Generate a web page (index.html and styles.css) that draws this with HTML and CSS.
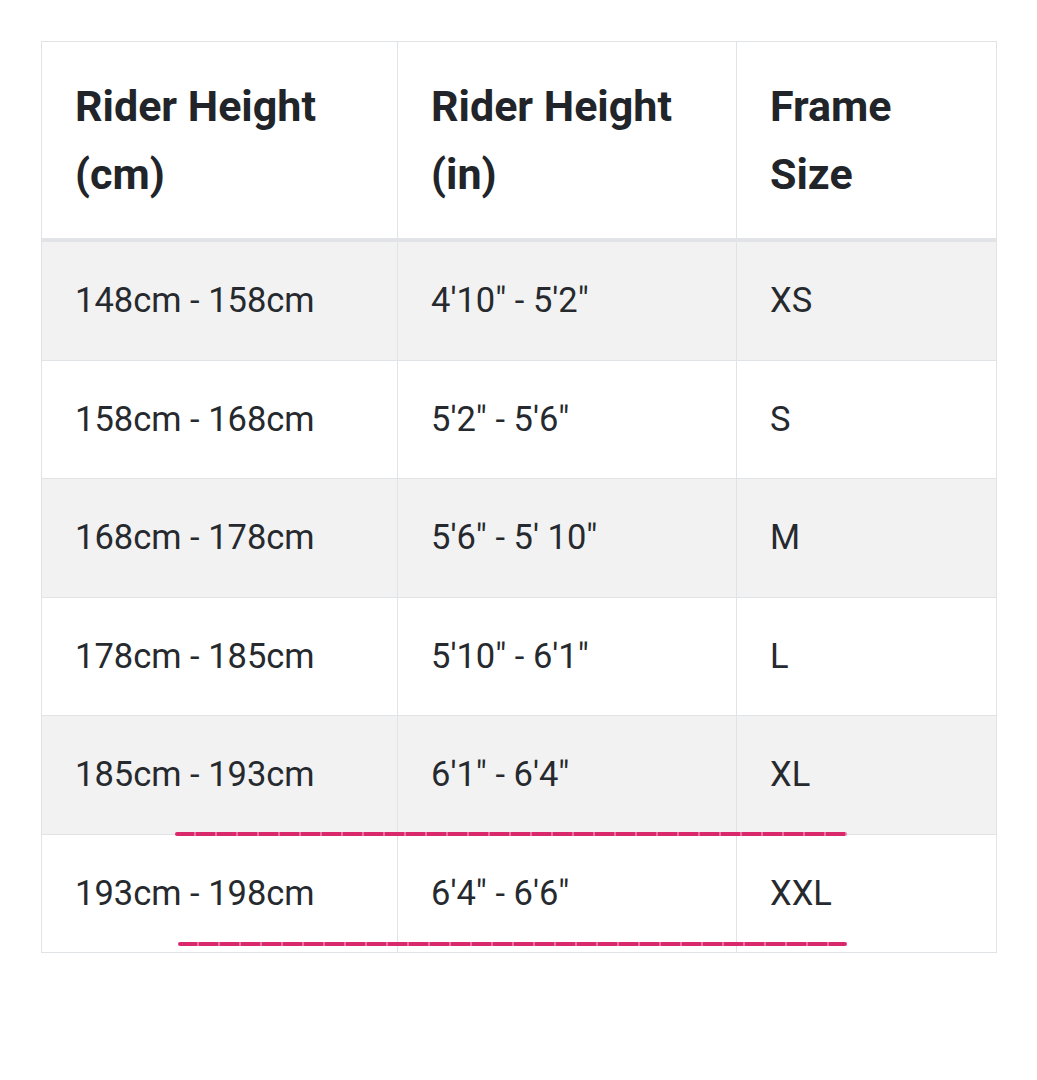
FILE: index.html
```html
<!DOCTYPE html>
<html lang="en">
<head>
<meta charset="utf-8">
<title>Frame size chart</title>
<link rel="stylesheet" href="styles.css">
</head>
<body>
<div class="page">
  <table class="size-table">
    <colgroup>
      <col class="c1">
      <col class="c2">
      <col class="c3">
    </colgroup>
    <thead>
      <tr>
        <th>Rider Height (cm)</th>
        <th>Rider Height (in)</th>
        <th>Frame Size</th>
      </tr>
    </thead>
    <tbody>
      <tr><td>148cm - 158cm</td><td>4'10" - 5'2"</td><td>XS</td></tr>
      <tr><td>158cm - 168cm</td><td>5'2" - 5'6"</td><td>S</td></tr>
      <tr><td>168cm - 178cm</td><td>5'6" - 5' 10"</td><td>M</td></tr>
      <tr><td>178cm - 185cm</td><td>5'10" - 6'1"</td><td>L</td></tr>
      <tr><td>185cm - 193cm</td><td>6'1" - 6'4"</td><td>XL</td></tr>
      <tr><td>193cm - 198cm</td><td>6'4" - 6'6"</td><td>XXL</td></tr>
    </tbody>
  </table>
  <div class="mark mark-1"></div>
  <div class="mark mark-2"></div>
</div>
</body>
</html>
```
FILE: styles.css
```css
html, body {
  margin: 0;
  padding: 0;
  background: #ffffff;
}

.page {
  position: relative;
  padding: 41px 0 0 41px;
  width: 1037px;
  height: 1080px;
  box-sizing: border-box;
  font-family: Roboto, "Liberation Sans", sans-serif;
  color: #212529;
}

.size-table {
  border-collapse: collapse;
  width: 955px;
  table-layout: fixed;
  border: 1px solid #e1e4e7;
}

.c1 { width: 356px; }
.c2 { width: 339px; }
.c3 { width: 260px; }

.size-table th,
.size-table td {
  border: 1px solid #e1e4e7;
  text-align: left;
  vertical-align: top;
  padding: 30px 33px;
}

.size-table th {
  font-size: 43px;
  line-height: 68px;
  font-weight: 700;
  color: #212529;
  border-bottom: 4px solid #e1e3e7;
}

.size-table td {
  font-size: 34.5px;
  line-height: 57.5px;
  font-weight: 400;
  color: #262a2e;
}

.size-table tbody tr:nth-child(odd) td {
  background: #f2f2f2;
}

.mark {
  position: absolute;
  height: 4px;
  border-radius: 2px;
  background: repeating-linear-gradient(
    to right,
    #d9296c 0,
    #d9296c 19px,
    #e9719c 19px,
    #e9719c 21px
  );
}

.mark-1 {
  top: 832px;
  left: 175px;
  width: 672px;
}

.mark-2 {
  top: 942px;
  left: 178px;
  width: 669px;
}
```
